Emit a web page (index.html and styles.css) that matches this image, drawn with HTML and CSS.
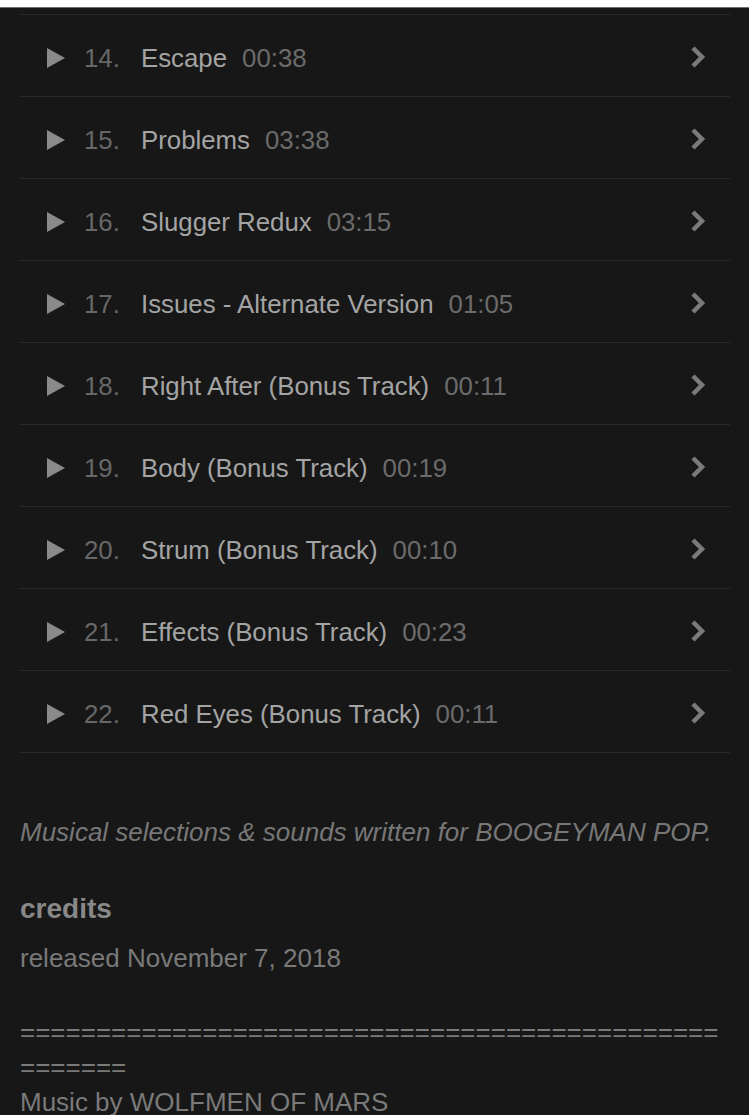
FILE: index.html
```html
<!DOCTYPE html>
<html>
<head>
<meta charset="utf-8">
<link rel="stylesheet" href="styles.css">
</head>
<body>
<div class="topbar"></div>
<main class="page">
  <ul class="tracks">
    <li class="track"><span class="play"></span><span class="num">14.</span><span class="title">Escape</span><span class="dur">00:38</span><svg class="chev" viewBox="0 0 16 24"><polyline points="3,3 12,12 3,21"/></svg></li>
    <li class="track"><span class="play"></span><span class="num">15.</span><span class="title">Problems</span><span class="dur">03:38</span><svg class="chev" viewBox="0 0 16 24"><polyline points="3,3 12,12 3,21"/></svg></li>
    <li class="track"><span class="play"></span><span class="num">16.</span><span class="title">Slugger Redux</span><span class="dur">03:15</span><svg class="chev" viewBox="0 0 16 24"><polyline points="3,3 12,12 3,21"/></svg></li>
    <li class="track"><span class="play"></span><span class="num">17.</span><span class="title">Issues - Alternate Version</span><span class="dur">01:05</span><svg class="chev" viewBox="0 0 16 24"><polyline points="3,3 12,12 3,21"/></svg></li>
    <li class="track"><span class="play"></span><span class="num">18.</span><span class="title">Right After (Bonus Track)</span><span class="dur">00:11</span><svg class="chev" viewBox="0 0 16 24"><polyline points="3,3 12,12 3,21"/></svg></li>
    <li class="track"><span class="play"></span><span class="num">19.</span><span class="title">Body (Bonus Track)</span><span class="dur">00:19</span><svg class="chev" viewBox="0 0 16 24"><polyline points="3,3 12,12 3,21"/></svg></li>
    <li class="track"><span class="play"></span><span class="num">20.</span><span class="title">Strum (Bonus Track)</span><span class="dur">00:10</span><svg class="chev" viewBox="0 0 16 24"><polyline points="3,3 12,12 3,21"/></svg></li>
    <li class="track"><span class="play"></span><span class="num">21.</span><span class="title">Effects (Bonus Track)</span><span class="dur">00:23</span><svg class="chev" viewBox="0 0 16 24"><polyline points="3,3 12,12 3,21"/></svg></li>
    <li class="track"><span class="play"></span><span class="num">22.</span><span class="title">Red Eyes (Bonus Track)</span><span class="dur">00:11</span><svg class="chev" viewBox="0 0 16 24"><polyline points="3,3 12,12 3,21"/></svg></li>
  </ul>
  <p class="about">Musical selections &amp; sounds written for BOOGEYMAN POP.</p>
  <h2 class="credits-head">credits</h2>
  <p class="released">released November 7, 2018</p>
  <p class="credits">=====================================================<br>Music by WOLFMEN OF MARS</p>
</main>
</body>
</html>
```

FILE: styles.css
```css
html, body {
  margin: 0;
  padding: 0;
}
body {
  background: #171717;
  font-family: "Liberation Sans", Arial, sans-serif;
  font-size: 26px;
  color: #7a7a7a;
  overflow: hidden;
}
.topbar {
  height: 7px;
  background: #ffffff;
  border-bottom: 1px solid #707070;
}
.page {
  padding: 0 19px 0 20px;
}
.tracks {
  list-style: none;
  margin: 6px 0 0 0;
  padding: 0;
  border-top: 1px solid #2a2a2a;
}
.track {
  display: flex;
  align-items: center;
  box-sizing: border-box;
  height: 82px;
  border-bottom: 1px solid #2a2a2a;
  padding: 6px 24px 0 27px;
  font-size: 25.8px;
}
.play {
  width: 0;
  height: 0;
  border-left: 18px solid #8a8a8a;
  border-top: 10px solid transparent;
  border-bottom: 10px solid transparent;
  margin-right: 19px;
  margin-top: -2px;
}
.num {
  width: 57px;
  color: #676767;
}
.title {
  color: #a4a4a4;
  margin-right: 15px;
}
.dur {
  color: #6b6b6b;
  flex: 1;
}
.chev {
  width: 16px;
  height: 24px;
  margin-top: -4px;
}
.chev polyline {
  fill: none;
  stroke: #7a7a7a;
  stroke-width: 4.5;
}
.about {
  margin: 64px 0 0 0;
  font-style: italic;
  color: #777777;
  line-height: 30px;
}
.credits-head {
  margin: 46px 0 0 0;
  font-size: 28px;
  font-weight: bold;
  color: #888888;
  line-height: 32px;
}
.released {
  margin: 17px 0 0 0;
  line-height: 32px;
  color: #7a7a7a;
}
.credits {
  margin: 41px 0 0 0;
  line-height: 35px;
  color: #7a7a7a;
  word-break: break-all;
}
```
